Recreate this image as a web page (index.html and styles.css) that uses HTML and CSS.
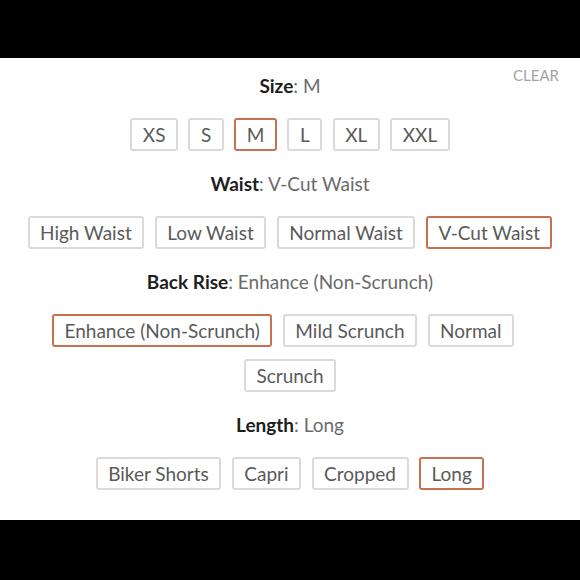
FILE: index.html
```html
<!DOCTYPE html>
<html>
<head>
<meta charset="utf-8">
<link rel="stylesheet" href="styles.css">
</head>
<body>
<div class="bar top"></div>
<main class="panel">
  <section class="group first">
    <div class="head">
      <span></span>
      <h2 class="label"><b>Size</b>: M</h2>
      <a class="clear">CLEAR</a>
    </div>
    <div class="options">
      <span class="opt">XS</span>
      <span class="opt">S</span>
      <span class="opt sel">M</span>
      <span class="opt">L</span>
      <span class="opt">XL</span>
      <span class="opt">XXL</span>
    </div>
  </section>
  <section class="group">
    <h2 class="label"><b>Waist</b>: V-Cut Waist</h2>
    <div class="options">
      <span class="opt">High Waist</span>
      <span class="opt">Low Waist</span>
      <span class="opt">Normal Waist</span>
      <span class="opt sel">V-Cut Waist</span>
    </div>
  </section>
  <section class="group">
    <h2 class="label"><b>Back Rise</b>: Enhance (Non-Scrunch)</h2>
    <div class="options">
      <span class="opt sel">Enhance (Non-Scrunch)</span>
      <span class="opt">Mild Scrunch</span>
      <span class="opt line-end">Normal</span>
      <span class="opt">Scrunch</span>
    </div>
  </section>
  <section class="group">
    <h2 class="label"><b>Length</b>: Long</h2>
    <div class="options">
      <span class="opt">Biker Shorts</span>
      <span class="opt">Capri</span>
      <span class="opt">Cropped</span>
      <span class="opt sel">Long</span>
    </div>
  </section>
</main>
<div class="bar bottom"></div>
</body>
</html>
```
FILE: styles.css
```css
html, body {
  margin: 0;
  padding: 0;
  background: #000;
}
body {
  width: 580px;
  height: 580px;
  overflow: hidden;
  font-family: Lato, "Liberation Sans", sans-serif;
  display: flex;
  flex-direction: column;
}
.bar.top {
  height: 58px;
  background: #000;
}
.bar.bottom {
  flex: 1;
  background: #000;
}
.panel {
  background: #fff;
  height: 462px;
  box-sizing: border-box;
  padding-top: 16px;
}
.group {
  display: flex;
  flex-direction: column;
  align-items: center;
  margin-bottom: 21px;
}
.head {
  width: 100%;
  display: grid;
  grid-template-columns: 1fr auto 1fr;
}
.clear {
  justify-self: end;
  align-self: start;
  margin-top: -11px;
  margin-right: 21px;
  font-size: 15px;
  line-height: 24px;
  color: #a3a3a3;
}
.label {
  margin: 0 0 20px 0;
  font-size: 19px;
  line-height: 24px;
  font-weight: 400;
  color: #6b6b6b;
  text-align: center;
}
.label b {
  font-weight: 700;
  color: #1e1e1e;
}
.options {
  display: flex;
  flex-wrap: wrap;
  justify-content: center;
  gap: 12px 10.5px;
  max-width: 560px;
}
.opt {
  display: block;
  box-sizing: border-box;
  height: 33px;
  line-height: 29px;
  padding: 0 10.5px;
  border: 2px solid #dadada;
  border-radius: 3px;
  font-size: 19px;
  color: #5a5a5a;
}
.opt.line-end {
  margin-right: 14px;
}
.opt.sel {
  border-color: #c7714f;
}
```
